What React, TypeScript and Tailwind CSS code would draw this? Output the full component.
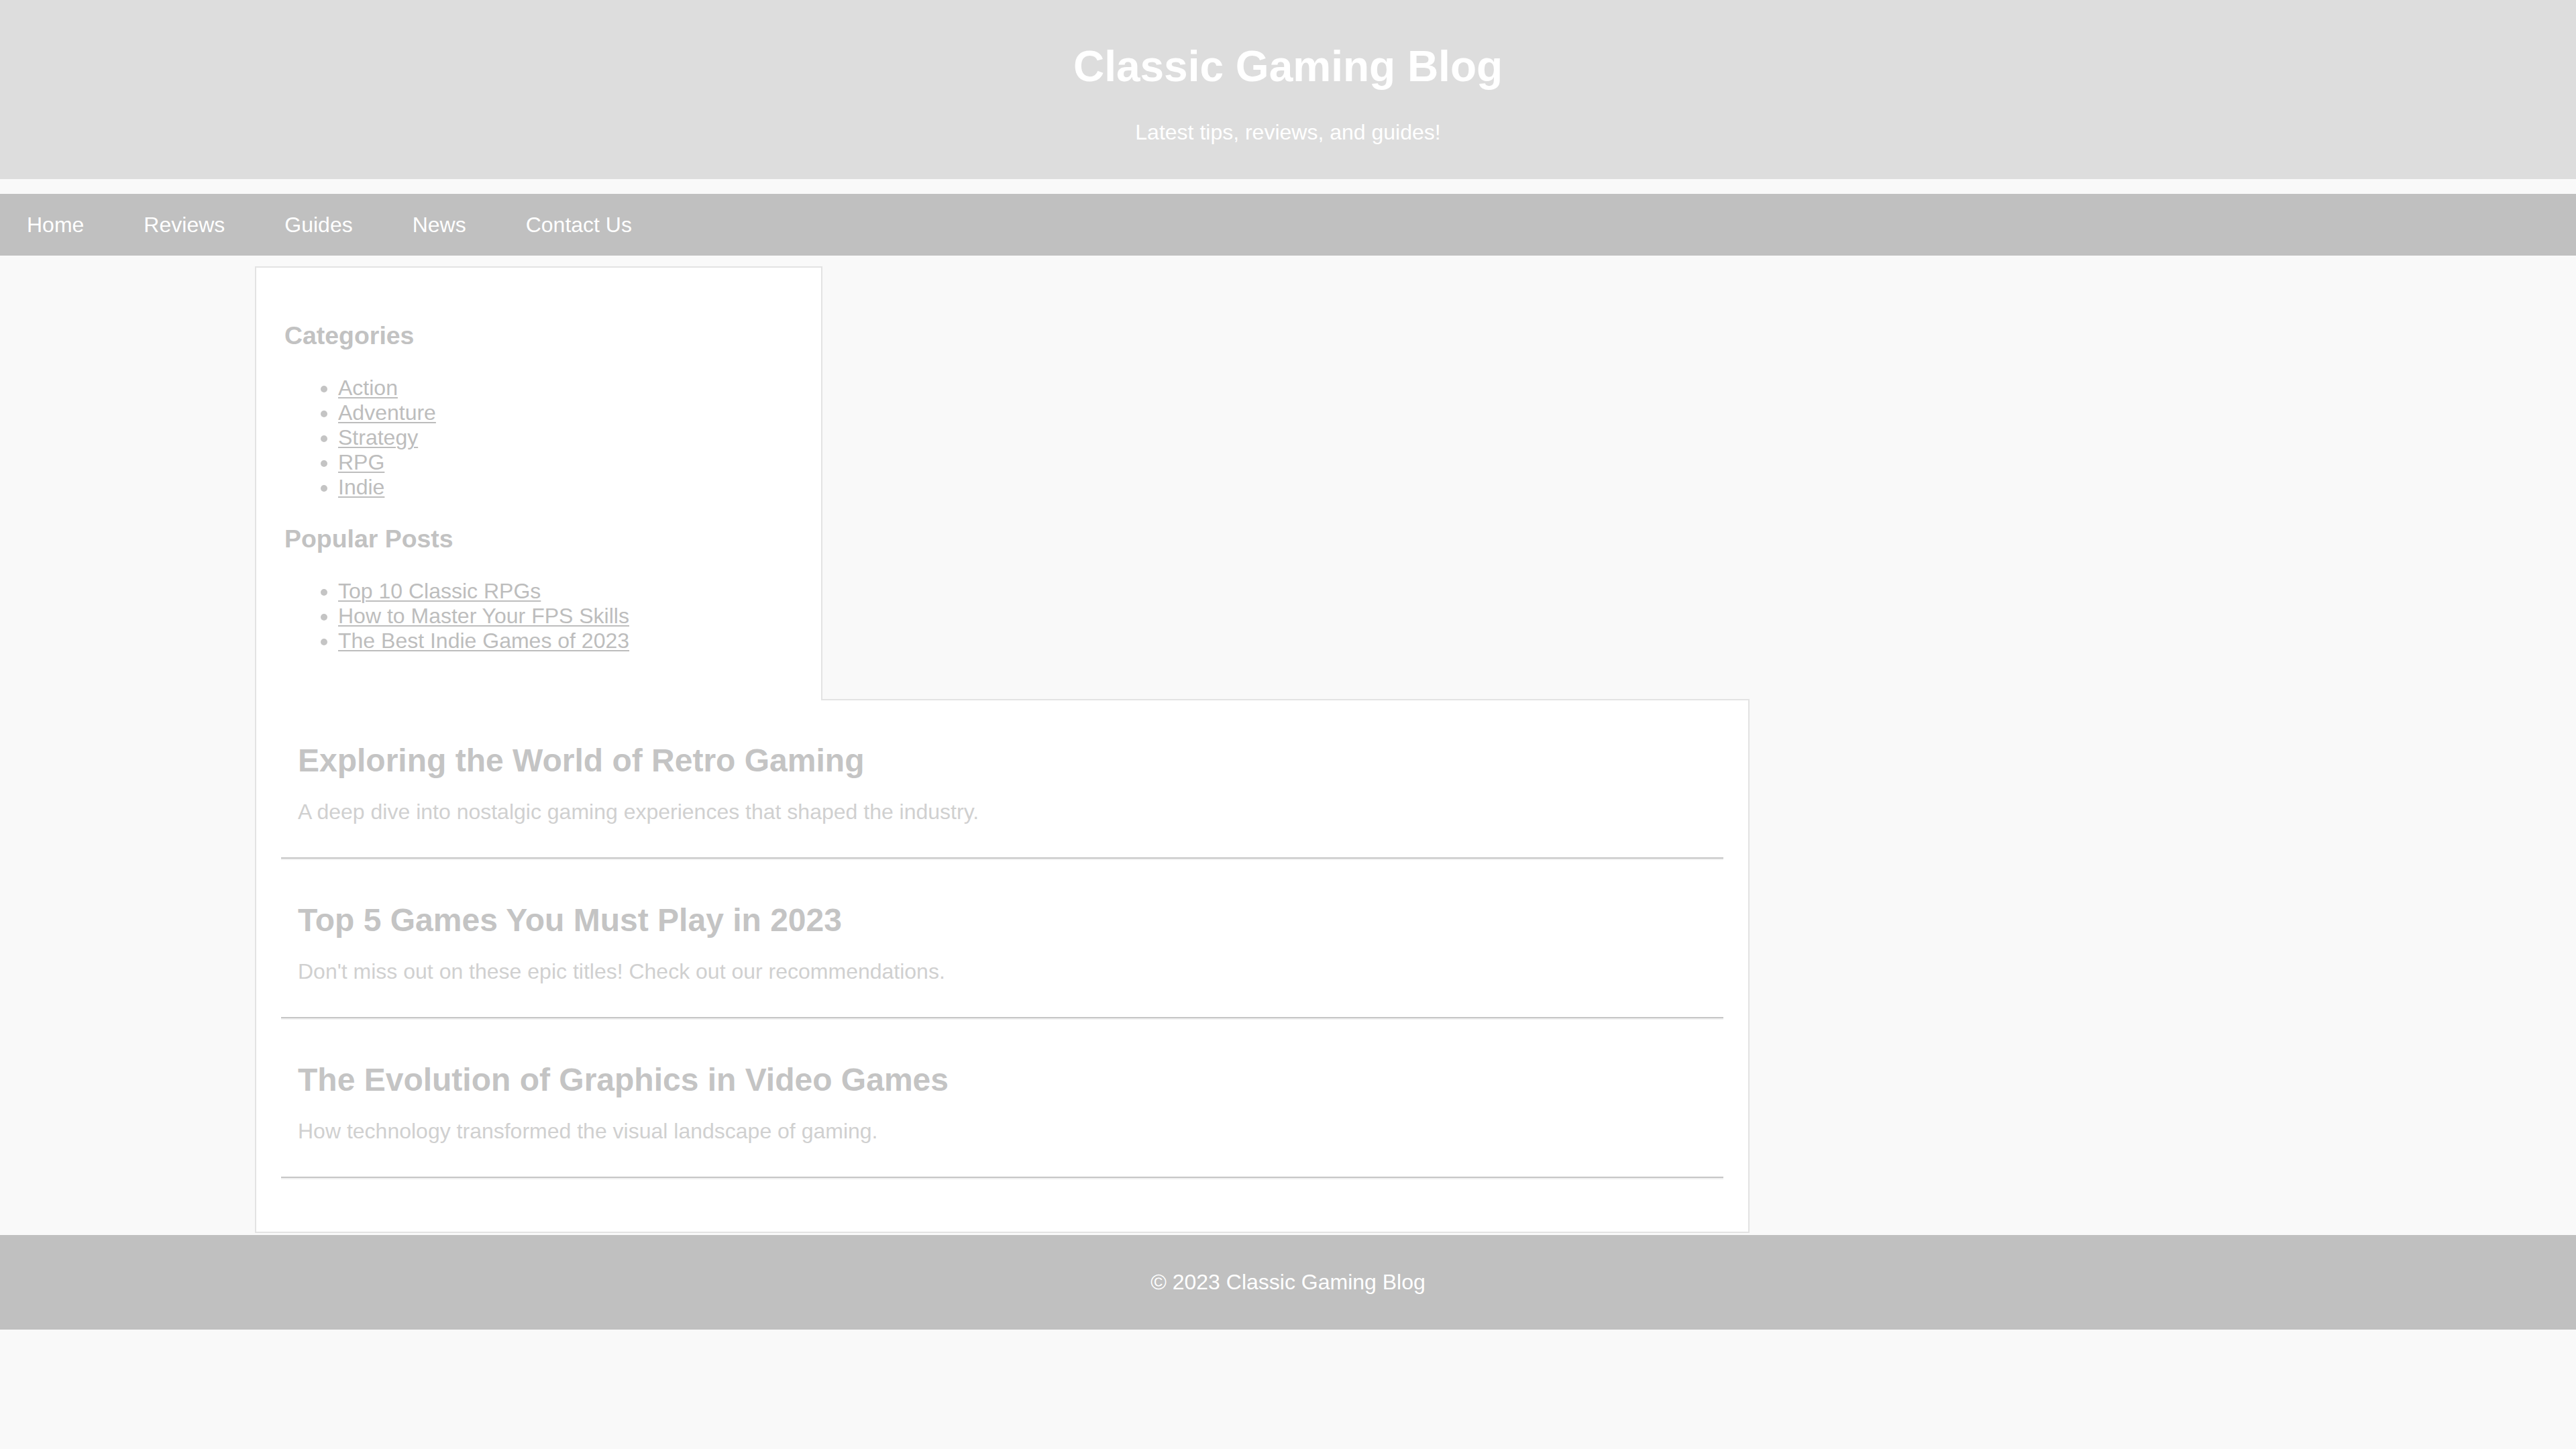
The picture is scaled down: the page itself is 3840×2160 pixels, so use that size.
import React from "react";

const navLinks = ["Home", "Reviews", "Guides", "News", "Contact Us"];
const categories = ["Action", "Adventure", "Strategy", "RPG", "Indie"];
const popular = [
  "Top 10 Classic RPGs",
  "How to Master Your FPS Skills",
  "The Best Indie Games of 2023",
];

const posts = [
  {
    title: "Exploring the World of Retro Gaming",
    text: "A deep dive into nostalgic gaming experiences that shaped the industry.",
  },
  {
    title: "Top 5 Games You Must Play in 2023",
    text: "Don't miss out on these epic titles! Check out our recommendations.",
  },
  {
    title: "The Evolution of Graphics in Video Games",
    text: "How technology transformed the visual landscape of gaming.",
  },
];

function LinkList({ items }: { items: string[] }) {
  return (
    <ul className="mt-[38px] list-disc pl-[80px] text-[32px] leading-[normal] text-[#bdbdbd] marker:text-[#c4c4c4]">
      {items.map((item) => (
        <li key={item}>
          <a href="#" className="underline decoration-2 underline-offset-[3px]">
            {item}
          </a>
        </li>
      ))}
    </ul>
  );
}

export default function App() {
  return (
    <div className="min-h-screen bg-[#f9f9f9] font-['Liberation_Sans',Arial,sans-serif]">
      <header className="flex h-[267px] flex-col items-center bg-[#dddddd] pt-[62px] text-white">
        <h1 className="text-[64px] font-bold leading-[normal]">Classic Gaming Blog</h1>
        <p className="mt-[43px] text-[32px] leading-[normal]">Latest tips, reviews, and guides!</p>
      </header>

      <nav className="mt-[22px] flex h-[92px] items-center gap-[9px] bg-[#c0c0c0]">
        {navLinks.map((link) => (
          <a key={link} href="#" className="px-[40px] text-[32px] leading-[normal] text-white">
            {link}
          </a>
        ))}
      </nav>

      <div className="ml-[380px] mt-[16px] w-[2228px]">
        <aside className="relative z-10 -mb-[2px] w-[846px] border-2 border-b-0 border-[#e3e3e3] bg-white pb-[70px] pl-[42px] pr-[40px] pt-[80px]">
          <h3 className="text-[37.44px] font-bold leading-[normal] text-[#c2c2c2]">Categories</h3>
          <LinkList items={categories} />
          <h3 className="mt-[37px] text-[37.44px] font-bold leading-[normal] text-[#c2c2c2]">
            Popular Posts
          </h3>
          <LinkList items={popular} />
        </aside>

        <main className="border-2 border-[#e3e3e3] bg-white px-[37px] pb-[78px]">
          {posts.map((post) => (
            <article key={post.title}>
              <div className="pb-[49px] pl-[25px] pt-[62px]">
                <h2 className="text-[48px] font-bold leading-[normal] text-[#c4c4c4]">{post.title}</h2>
                <p className="mt-[31px] text-[32px] leading-[normal] text-[#d0d0d0]">{post.text}</p>
              </div>
              <div className="h-[4px] border-b-2 border-t-2 border-b-[#f0f0f0] border-t-[#c6c6c6]" />
            </article>
          ))}
        </main>
      </div>

      <footer className="mt-[3px] flex h-[141px] items-center justify-center bg-[#c0c0c0]">
        <p className="text-[32px] leading-[normal] text-white">© 2023 Classic Gaming Blog</p>
      </footer>
    </div>
  );
}
